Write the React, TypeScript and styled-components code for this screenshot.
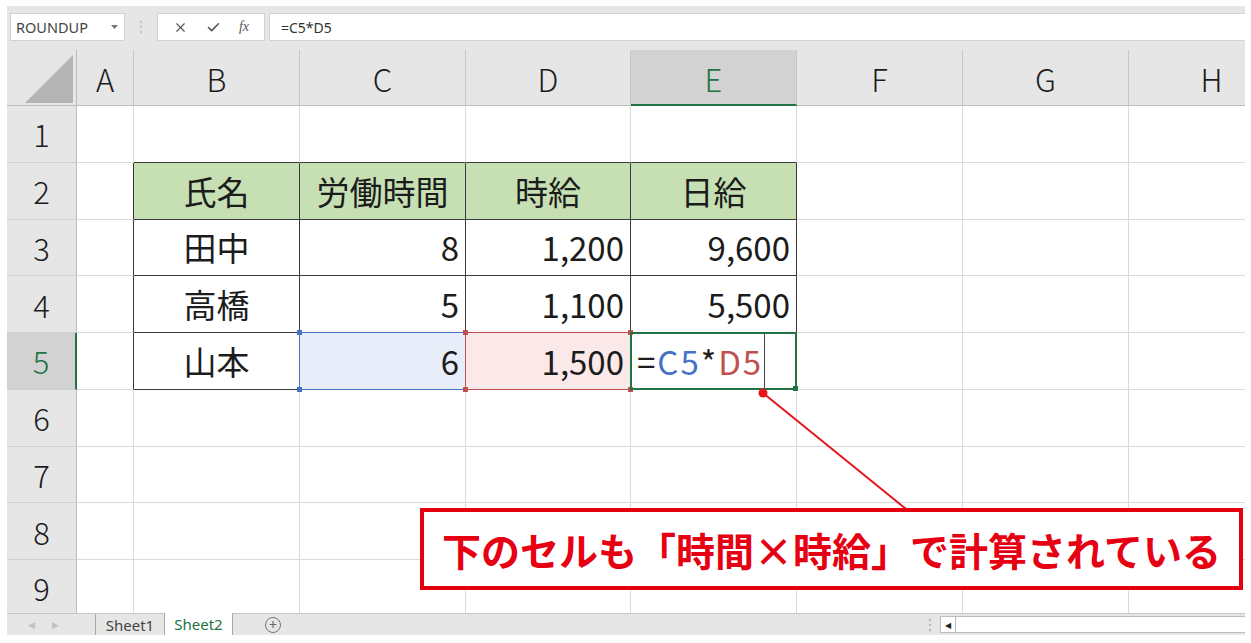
import React from "react";
import styled, { createGlobalStyle } from "styled-components";
import { X, Check } from "lucide-react";

const green = "#217346";
const gridLine = "#dadada";
const tableLine = "#3a3a3a";
const ink = "#1c1c1c";
const jp = `"Noto Sans CJK JP", "Noto Sans", sans-serif`;
const ui = `"Noto Sans", "Liberation Sans", sans-serif`;

const Global = createGlobalStyle`
  html, body { margin: 0; background: #fff; }
  body { font-family: ${jp}; }
  * { box-sizing: border-box; }
`;

const Page = styled.div`
  width: 1251px;
  height: 643px;
  padding: 6px 6px 8px 7px;
`;

const Workbook = styled.div`
  position: relative;
  width: 1238px;
  height: 629px;
  display: flex;
  flex-direction: column;
  overflow: hidden;
`;

/* ---------- formula bar ---------- */
const FormulaBar = styled.div`
  height: 44px;
  flex: none;
  display: flex;
  align-items: flex-start;
  padding: 7px 0 0 3px;
  background: #e6e6e6;
  font-family: ${ui};
  font-size: 14px;
  color: #444;
`;

const NameBox = styled.div`
  width: 115px;
  height: 28px;
  display: flex;
  align-items: center;
  justify-content: space-between;
  padding: 0 6px 0 5px;
  background: #fff;
  border: 1px solid #d2d2d2;
  font-size: 14.5px;
`;

const Grip = styled.div`
  width: 32px;
  height: 28px;
  display: flex;
  align-items: center;
  justify-content: center;
`;

const ButtonBox = styled.div`
  width: 108px;
  height: 28px;
  display: flex;
  align-items: center;
  justify-content: space-around;
  padding: 0 6px;
  background: #fff;
  border: 1px solid #d2d2d2;
  color: #555;
`;

const Fx = styled.span`
  font-family: "Liberation Serif", serif;
  font-style: italic;
  font-size: 14px;
  color: #555;
`;

const FormulaInput = styled.div`
  flex: 1;
  height: 28px;
  margin-left: 4px;
  display: flex;
  align-items: center;
  padding-left: 11px;
  background: #fff;
  border: 1px solid #d2d2d2;
  border-right: none;
  color: #333;
`;

/* ---------- grid ---------- */
const Grid = styled.div`
  flex: none;
  height: 563px;
  display: grid;
  grid-template-columns: 70px 57px 166px 166px 165px 166px 166px 166px 166px;
  grid-template-rows: 56px repeat(9, 56.75px);
  overflow: hidden;
`;

const Corner = styled.div`
  display: flex;
  align-items: flex-end;
  justify-content: flex-end;
  padding: 0 3px 2px 0;
  background: #e6e6e6;
  border-right: 1px solid #bcbcbc;
  border-bottom: 1px solid #bcbcbc;
`;

const Triangle = styled.div`
  width: 48px;
  height: 48px;
  background: #b4b4b4;
  clip-path: polygon(100% 0, 100% 100%, 0 100%);
`;

const ColHead = styled.div<{ $active?: boolean }>`
  display: flex;
  align-items: center;
  justify-content: center;
  padding-top: 2px;
  background: ${(p) => (p.$active ? "#d2d2d2" : "#e6e6e6")};
  color: ${(p) => (p.$active ? green : ink)};
  border-right: 1px solid #c6c6c6;
  border-bottom: ${(p) => (p.$active ? `2px solid ${green}` : "1px solid #bcbcbc")};
  font-size: 31px;
  font-weight: 300;
`;

const RowHead = styled.div<{ $active?: boolean }>`
  display: flex;
  align-items: center;
  justify-content: center;
  background: ${(p) => (p.$active ? "#d2d2d2" : "#e6e6e6")};
  color: ${(p) => (p.$active ? green : ink)};
  border-right: ${(p) => (p.$active ? `2px solid ${green}` : "1px solid #bcbcbc")};
  border-bottom: 1px solid #d0d0d0;
  font-size: 31px;
  font-weight: 300;
`;

type Align = "left" | "center" | "right";

const Cell = styled.div<{ $align: Align; $fill?: string; $right?: string; $bottom?: string }>`
  position: relative;
  display: flex;
  align-items: center;
  justify-content: ${(p) =>
    p.$align === "right" ? "flex-end" : p.$align === "center" ? "center" : "flex-start"};
  padding: 0 6px;
  background: ${(p) => p.$fill ?? "#fff"};
  border-right: 1px solid ${(p) => p.$right ?? gridLine};
  border-bottom: 1px solid ${(p) => p.$bottom ?? gridLine};
  font-size: 33px;
  color: ${ink};
  white-space: nowrap;
`;

const Marker = styled.div<{ $color: string; $width: number }>`
  position: absolute;
  top: -1px;
  left: -1px;
  right: -1px;
  bottom: -1px;
  border: ${(p) => `${p.$width}px solid ${p.$color}`};
  z-index: 2;
  pointer-events: none;
`;

const Handle = styled.span<{ $color: string; $x: "left" | "right"; $y: "top" | "bottom" }>`
  position: absolute;
  width: 5px;
  height: 5px;
  background: ${(p) => p.$color};
  ${(p) => p.$x}: -3px;
  ${(p) => p.$y}: -3px;
`;

const EditText = styled.span`
  align-self: stretch;
  display: flex;
  align-items: center;
  padding-right: 1px;
  border-right: 1px solid #444;
  letter-spacing: 2px;
`;

const Ref = styled.span<{ $color: string }>`
  color: ${(p) => p.$color};
`;

/* ---------- sheet tabs ---------- */
const TabBar = styled.div`
  height: 22px;
  flex: none;
  display: flex;
  align-items: stretch;
  background: #e6e6e6;
  border-top: 1px solid #c6c6c6;
  font-family: ${ui};
  font-size: 15px;
`;

const TabNav = styled.div`
  width: 88px;
  display: flex;
  align-items: center;
  gap: 17px;
  padding-left: 21px;
  color: #c2c2c2;
  font-size: 9px;
`;

const Tab = styled.div<{ $active?: boolean }>`
  width: 69px;
  display: flex;
  align-items: center;
  justify-content: center;
  margin-top: ${(p) => (p.$active ? "-1px" : "0")};
  background: ${(p) => (p.$active ? "#fff" : "transparent")};
  color: ${(p) => (p.$active ? green : "#444")};
  border-left: 1px solid #a9a9a9;
  border-right: ${(p) => (p.$active ? "1px solid #a9a9a9" : "none")};
`;

const AddSheet = styled.div`
  width: 16px;
  height: 16px;
  align-self: center;
  margin-left: 32px;
  border: 1px solid #777;
  border-radius: 50%;
  display: flex;
  align-items: center;
  justify-content: center;
  color: #666;
  font-size: 14px;
  line-height: 1;
`;

const Spacer = styled.div`
  flex: 1;
`;

const ScrollGrip = styled.div`
  width: 10px;
  display: flex;
  align-items: center;
  justify-content: center;
`;

const ScrollTrack = styled.div`
  width: 305px;
  height: 17px;
  align-self: center;
  display: flex;
  background: #fff;
  border: 1px solid #bdbdbd;
  border-right: none;
  margin-left: 5px;
`;

const ScrollButton = styled.div`
  width: 15px;
  display: flex;
  align-items: center;
  justify-content: center;
  border-right: 1px solid #bdbdbd;
  font-size: 8px;
  color: #222;
`;

/* ---------- annotation ---------- */
const Pointer = styled.svg`
  position: absolute;
  left: 0;
  top: 0;
  z-index: 5;
  pointer-events: none;
`;

const Callout = styled.div`
  position: absolute;
  left: 413px;
  top: 502px;
  width: 823px;
  height: 82px;
  z-index: 6;
  display: flex;
  align-items: center;
  justify-content: center;
  background: #fff;
  border: 4px solid #e5000f;
  color: #e60012;
  font-family: ${jp};
  font-weight: 700;
  font-size: 39px;
`;

const VDots = ({ color = "#b8b8b8" }: { color?: string }) => (
  <svg width="4" height="14" viewBox="0 0 4 14">
    <circle cx="2" cy="2" r="1.2" fill={color} />
    <circle cx="2" cy="7" r="1.2" fill={color} />
    <circle cx="2" cy="12" r="1.2" fill={color} />
  </svg>
);

const cols = ["A", "B", "C", "D", "E", "F", "G", "H"];
const rows = [1, 2, 3, 4, 5, 6, 7, 8, 9];

const table: Record<number, string[]> = {
  2: ["氏名", "労働時間", "時給", "日給"],
  3: ["田中", "8", "1,200", "9,600"],
  4: ["高橋", "5", "1,100", "5,500"],
  5: ["山本", "6", "1,500", ""],
};

type Corners = Array<["left" | "right", "top" | "bottom"]>;
const allCorners: Corners = [["left", "top"], ["left", "bottom"], ["right", "top"], ["right", "bottom"]];

const marks: Record<string, { color: string; width: number; handles: Corners }> = {
  C5: { color: "#4472c4", width: 1, handles: allCorners },
  D5: { color: "#c0504d", width: 1, handles: allCorners },
  E5: { color: green, width: 2, handles: [["right", "bottom"]] },
};

const fills: Record<string, string> = {
  C5: "#e8eef9",
  D5: "#fbe9ea",
};

function renderCell(r: number, c: string, ci: number) {
  const id = `${c}${r}`;
  const inTable = r >= 2 && r <= 5 && ci >= 1 && ci <= 4;
  const right = inTable || (ci === 0 && r >= 2 && r <= 5) ? tableLine : undefined;
  const bottom = inTable || (r === 1 && ci >= 1 && ci <= 4) ? tableLine : undefined;
  const align: Align = r === 2 || ci === 1 ? "center" : id === "E5" ? "left" : "right";
  const fill = inTable && r === 2 ? "#c6e0b4" : fills[id];
  const mark = marks[id];

  let content: React.ReactNode = inTable ? table[r][ci - 1] : null;
  if (id === "E5") {
    content = (
      <EditText>
        =<Ref $color="#4472c4">C5</Ref>*<Ref $color="#c0504d">D5</Ref>
      </EditText>
    );
  }

  return (
    <Cell key={id} $align={align} $fill={fill} $right={right} $bottom={bottom}>
      {content}
      {mark && (
        <Marker $color={mark.color} $width={mark.width}>
          {mark.handles.map(([x, y]) => (
            <Handle key={x + y} $color={mark.color} $x={x} $y={y} />
          ))}
        </Marker>
      )}
    </Cell>
  );
}

export default function App() {
  return (
    <Page>
      <Global />
      <Workbook>
        <FormulaBar>
          <NameBox>
            <span>ROUNDUP</span>
            <svg width="7" height="4" viewBox="0 0 7 4">
              <path d="M0 0 L7 0 L3.5 4 Z" fill="#777" />
            </svg>
          </NameBox>
          <Grip>
            <VDots color="#c4c4c4" />
          </Grip>
          <ButtonBox>
            <X size={15} strokeWidth={1.8} />
            <Check size={15} strokeWidth={2.6} />
            <Fx>fx</Fx>
          </ButtonBox>
          <FormulaInput>=C5*D5</FormulaInput>
        </FormulaBar>

        <Grid>
          <Corner>
            <Triangle />
          </Corner>
          {cols.map((c) => (
            <ColHead key={c} $active={c === "E"}>
              {c}
            </ColHead>
          ))}
          {rows.map((r) => (
            <React.Fragment key={r}>
              <RowHead $active={r === 5}>{r}</RowHead>
              {cols.map((c, ci) => renderCell(r, c, ci))}
            </React.Fragment>
          ))}
        </Grid>

        <TabBar>
          <TabNav>
            <span>◀</span>
            <span>▶</span>
          </TabNav>
          <Tab>Sheet1</Tab>
          <Tab $active>Sheet2</Tab>
          <AddSheet>+</AddSheet>
          <Spacer />
          <ScrollGrip>
            <VDots />
          </ScrollGrip>
          <ScrollTrack>
            <ScrollButton>◀</ScrollButton>
          </ScrollTrack>
        </TabBar>

        <Pointer width="1238" height="629" viewBox="0 0 1238 629">
          <line x1="756" y1="387" x2="899" y2="503" stroke="#e8141c" strokeWidth="2" />
          <circle cx="756" cy="387" r="4.5" fill="#e8141c" />
        </Pointer>
        <Callout>下のセルも「時間×時給」で計算されている</Callout>
      </Workbook>
    </Page>
  );
}
